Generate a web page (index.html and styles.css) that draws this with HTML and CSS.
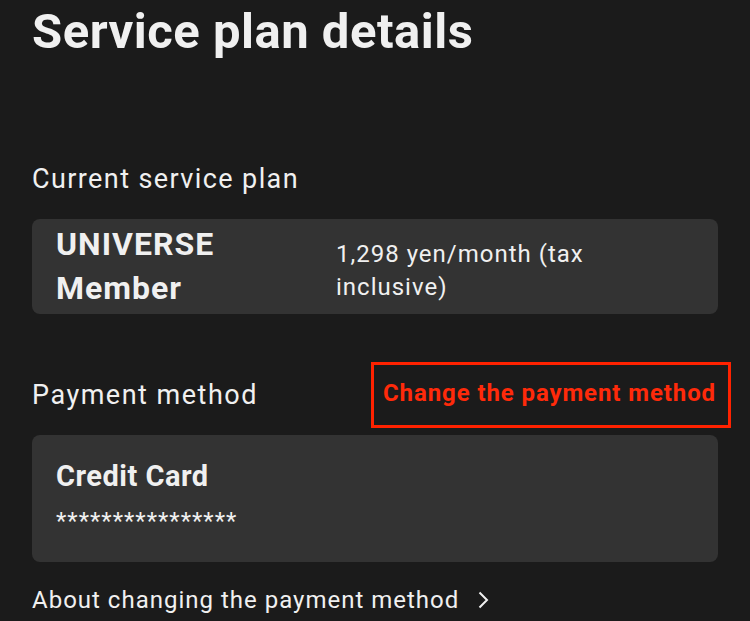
FILE: index.html
```html
<!DOCTYPE html>
<html lang="en">
<head>
<meta charset="utf-8">
<title>Service plan details</title>
<link rel="stylesheet" href="styles.css">
</head>
<body>
<main class="page">
  <h1 class="title">Service plan details</h1>

  <section class="section plan-section">
    <h2 class="label">Current service plan</h2>
    <div class="card plan-card">
      <div class="plan-name">UNIVERSE<br>Member</div>
      <div class="plan-price">1,298 yen/month (tax<br>inclusive)</div>
    </div>
  </section>

  <section class="section pay-section">
    <div class="pay-head">
      <h2 class="label pay-label">Payment method</h2>
      <a class="change-link" href="#">Change the payment method</a>
    </div>
    <div class="card pay-card">
      <div class="card-title">Credit Card</div>
      <div class="card-number">****************</div>
    </div>
    <a class="about-link" href="#">About changing the payment method
      <svg class="chev" width="14" height="18" viewBox="0 0 14 18" aria-hidden="true"><path d="M3.5 1.5 L11 9 L3.5 16.5" fill="none" stroke="#f0f0f0" stroke-width="2"/></svg>
    </a>
  </section>
</main>
</body>
</html>
```

FILE: styles.css
```css
html, body {
  margin: 0;
  padding: 0;
  background: #1b1b1b;
}
body {
  font-family: Roboto, "Noto Sans", sans-serif;
  color: #f0f0f0;
}
.page {
  padding: 0 32px 0 32px;
}
.title {
  margin: 0;
  padding-top: 4px;
  font-size: 49px;
  line-height: 56px;
  font-weight: 700;
  letter-spacing: 0.5px;
}
.plan-section {
  margin-top: 103px;
}
.label {
  margin: 0;
  font-size: 27px;
  line-height: 32px;
  font-weight: 400;
  letter-spacing: 1.4px;
}
.card {
  background: #333333;
  border-radius: 8px;
}
.plan-card {
  margin-top: 24px;
  display: flex;
  align-items: flex-start;
  padding: 3px 24px 4px 24px;
}
.plan-name {
  width: 280px;
  font-size: 32px;
  line-height: 44px;
  font-weight: 700;
  letter-spacing: 1px;
}
.plan-price {
  margin-top: 16px;
  font-size: 24px;
  line-height: 33px;
  letter-spacing: 1px;
}
.pay-section {
  margin-top: 48px;
}
.pay-head {
  display: flex;
  align-items: flex-start;
  justify-content: space-between;
  margin-right: -13px;
}
.pay-label {
  margin-top: 17px;
  letter-spacing: 1.5px;
}
.change-link {
  color: #ff2a0a;
  text-decoration: none;
  font-size: 24px;
  line-height: 28px;
  font-weight: 700;
  letter-spacing: 0.9px;
  border: 3px solid #ff2200;
  padding: 14px 12px 18px 9px;
}
.pay-card {
  margin-top: 7px;
  padding: 24px 24px 25px 24px;
}
.card-title {
  font-size: 29px;
  line-height: 34px;
  font-weight: 700;
  letter-spacing: 0.5px;
}
.card-number {
  margin-top: 12px;
  font-size: 24px;
  line-height: 32px;
  letter-spacing: 1px;
}
.about-link {
  display: flex;
  align-items: center;
  gap: 17px;
  margin-top: 22px;
  color: #f0f0f0;
  text-decoration: none;
  font-size: 24px;
  line-height: 32px;
  letter-spacing: 1px;
}
.chev { display: block; }
```
